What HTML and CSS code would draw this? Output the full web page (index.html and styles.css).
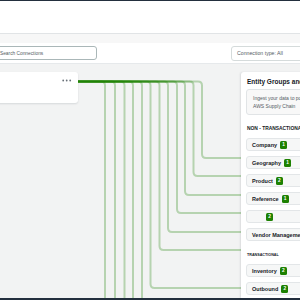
FILE: index.html
```html
<!DOCTYPE html>
<html lang="en">
<head>
    <meta charset="UTF-8">
    <meta name="viewport" content="width=device-width, initial-scale=1.0">
    <title>Connections</title>
    <link rel="stylesheet" href="styles.css">
</head>
<body>
    <div class="topbar"></div>
    <div class="header"></div>
    <div class="band"></div>
    <div class="toolbar">
        <input class="search" type="text" placeholder="Search Connections">
        <div class="select">Connection type: All</div>
    </div>
    <div class="main">
        <div class="canvas">
            <div class="node">
                <svg class="dots" width="10" height="3" viewBox="0 0 10 3">
                    <circle cx="1.2" cy="1.5" r="0.9"/>
                    <circle cx="4.7" cy="1.5" r="0.9"/>
                    <circle cx="8.2" cy="1.5" r="0.9"/>
                </svg>
            </div>
            <!-- links from the source node to each entity in the panel -->
            <svg class="links" width="241" height="234" viewBox="0 64 241 234">
                <path d="M78 81.5 H101 Q105 81.5 105 85.5 V374 Q105 378 109 378 H241"/>
                <path d="M78 81.5 H111 Q115 81.5 115 85.5 V356 Q115 360 119 360 H241"/>
                <path d="M78 81.5 H120.5 Q124.5 81.5 124.5 85.5 V338 Q124.5 342 128.5 342 H241"/>
                <path d="M78 81.5 H129 Q133 81.5 133 85.5 V320 Q133 324 137 324 H241"/>
                <path d="M78 81.5 H138 Q142 81.5 142 85.5 V302 Q142 306 146 306 H241"/>
                <path d="M78 81.5 H146.5 Q150.5 81.5 150.5 85.5 V284 Q150.5 288 154.5 288 H241"/>
                <path d="M78 81.5 H155.5 Q159.5 81.5 159.5 85.5 V246 Q159.5 250 163.5 250 H241"/>
                <path d="M78 81.5 H164 Q168 81.5 168 85.5 V228 Q168 232 172 232 H241"/>
                <path d="M78 81.5 H173 Q177 81.5 177 85.5 V209 Q177 213 181 213 H241"/>
                <path d="M78 81.5 H181 Q185 81.5 185 85.5 V191 Q185 195 189 195 H241"/>
                <path d="M78 81.5 H189.5 Q193.5 81.5 193.5 85.5 V172 Q193.5 176 197.5 176 H241"/>
                <path d="M78 81.5 H198 Q202 81.5 202 85.5 V154 Q202 158 206 158 H241"/>
            </svg>
        </div>
        <aside class="panel">
            <div class="panel-title">Entity Groups and Connections</div>
            <div class="info">Ingest your data to populate entities in<br>AWS Supply Chain</div>
            <div class="section-label">Non - Transactional</div>
            <div class="item">Company <span class="badge">1</span></div>
            <div class="item">Geography <span class="badge">1</span></div>
            <div class="item">Product <span class="badge">2</span></div>
            <div class="item">Reference <span class="badge">1</span></div>
            <div class="item"><span class="blank"></span><span class="badge">2</span></div>
            <div class="item">Vendor Management <span class="badge">3</span></div>
            <div class="section-label small">Transactional</div>
            <div class="item">Inventory <span class="badge">2</span></div>
            <div class="item">Outbound <span class="badge">2</span></div>
        </aside>
    </div>
    <div class="footer"></div>
</body>
</html>
```

FILE: styles.css
```css
body {
    margin: 0;
    width: 300px;
    height: 300px;
    overflow: hidden;
    font-family: "Liberation Sans", Arial, sans-serif;
    color: #16191f;
    background: #f2f3f3;
}
.topbar {
    height: 1px;
    background: #232f3e;
}
.header {
    height: 32px;
    background: #fff;
    border-bottom: 1px solid #e1e4e6;
}
.band {
    height: 9px;
    background: #f7f7f7;
}
.toolbar {
    height: 20px;
    background: #fff;
    border-bottom: 1px solid #e6e9eb;
    display: flex;
    align-items: center;
}
.search {
    box-sizing: border-box;
    margin: 0 0 0 -5px;
    width: 102px;
    height: 14px;
    padding: 0 0 0 4px;
    border: 1px solid #aab7b8;
    border-radius: 3px;
    font-family: inherit;
    font-size: 4.8px;
    outline: none;
}
.search::placeholder {
    color: #545b64;
}
.select {
    box-sizing: border-box;
    margin: 0 -6px 0 auto;
    width: 75px;
    height: 15px;
    padding-left: 5px;
    border: 1px solid #d5dbdb;
    border-radius: 3px;
    font-size: 5.2px;
    color: #545b64;
    display: flex;
    align-items: center;
}
.main {
    height: 234px;
    display: flex;
}
.canvas {
    position: relative;
    width: 241px;
    flex: none;
}
.node {
    position: absolute;
    left: -4px;
    top: 8px;
    width: 82px;
    height: 31px;
    background: #fff;
    border-radius: 3px;
    box-shadow: 0 1px 2px rgba(0, 22, 44, 0.12);
}
.dots {
    position: absolute;
    left: 66px;
    top: 7px;
    fill: #687078;
}
.links {
    position: absolute;
    left: 0;
    top: 0;
}
.links path {
    fill: none;
    stroke: #1d8102;
    stroke-width: 2;
    stroke-opacity: 0.28;
}
.panel {
    flex: none;
    box-sizing: border-box;
    width: 140px;
    margin-top: 8px;
    padding: 5px 0 0 5px;
    background: #fff;
    border-radius: 3px 0 0 0;
    box-shadow: -1px 0 2px rgba(0, 22, 44, 0.1);
    white-space: nowrap;
}
.panel-title {
    margin-left: 1px;
    font-size: 6.5px;
    font-weight: bold;
    line-height: 9px;
}
.info {
    box-sizing: border-box;
    margin-top: 3px;
    height: 26px;
    padding: 4px 6px;
    background: #f8f8f8;
    border: 1px solid #e1e4e6;
    border-radius: 3px;
    font-size: 5px;
    line-height: 8px;
    color: #545b64;
}
.section-label {
    margin: 10px 0 0 1px;
    font-size: 4.9px;
    line-height: 8px;
    font-weight: bold;
    text-transform: uppercase;
}
.section-label.small {
    font-size: 3.7px;
}
.item {
    box-sizing: border-box;
    margin-top: 5px;
    height: 13px;
    padding-left: 5px;
    background: #f6f7f7;
    border: 1px solid #e3e6e8;
    border-radius: 3px;
    display: flex;
    align-items: center;
    font-size: 5.5px;
    font-weight: bold;
}
.blank {
    width: 11px;
}
.badge {
    margin-left: 3px;
    min-width: 7px;
    height: 8px;
    border-radius: 1.5px;
    background: #1d8102;
    color: #fff;
    font-size: 4.8px;
    display: inline-flex;
    align-items: center;
    justify-content: center;
}
.footer {
    height: 2px;
    background: #232f3e;
}
```
